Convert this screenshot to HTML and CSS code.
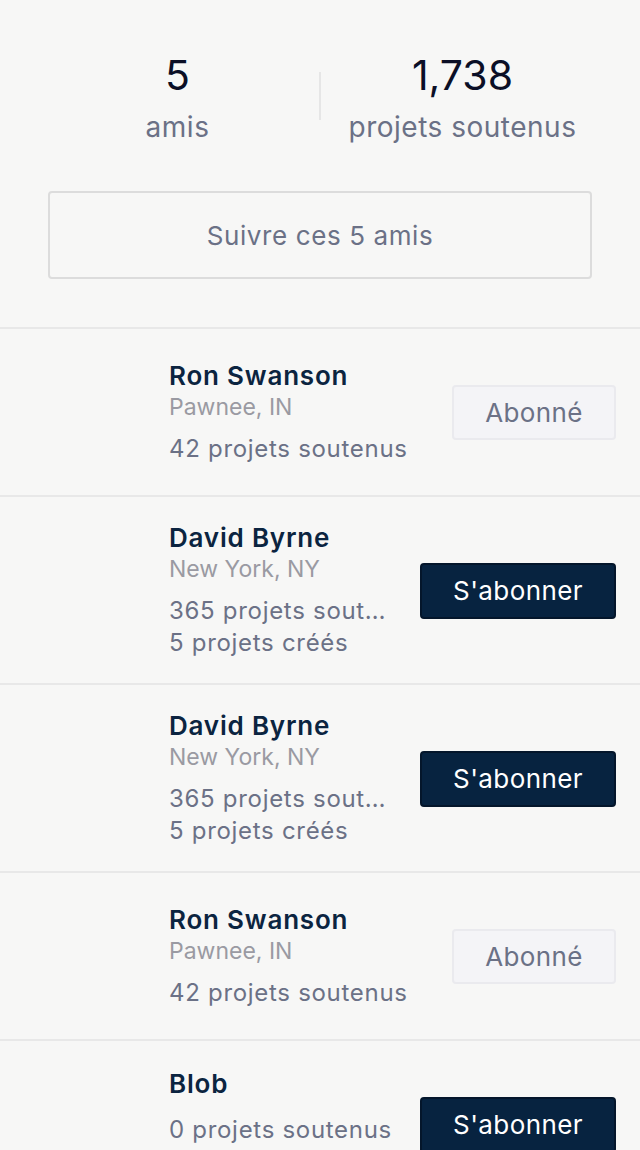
FILE: index.html
```html
<!DOCTYPE html>
<html lang="fr">
<head>
<meta charset="utf-8">
<link rel="stylesheet" href="styles.css">
</head>
<body>
<div class="page">
  <section class="summary">
    <div class="stats">
      <div class="stat">
        <div class="stat-num">5</div>
        <div class="stat-label">amis</div>
      </div>
      <div class="stat-divider"></div>
      <div class="stat">
        <div class="stat-num">1,738</div>
        <div class="stat-label">projets soutenus</div>
      </div>
    </div>
    <button class="follow-all">Suivre ces 5 amis</button>
  </section>

  <ul class="friends">
    <li class="friend">
      <span class="avatar"></span>
      <div class="info">
        <div class="name">Ron Swanson</div>
        <div class="loc">Pawnee, IN</div>
        <div class="counts">
          <div class="count">42 projets soutenus</div>
        </div>
      </div>
      <button class="btn btn-following">Abonné</button>
    </li>
    <li class="friend">
      <span class="avatar"></span>
      <div class="info">
        <div class="name">David Byrne</div>
        <div class="loc">New York, NY</div>
        <div class="counts">
          <div class="count">365 projets soutenus</div>
          <div class="count">5 projets créés</div>
        </div>
      </div>
      <button class="btn btn-follow">S'abonner</button>
    </li>
    <li class="friend">
      <span class="avatar"></span>
      <div class="info">
        <div class="name">David Byrne</div>
        <div class="loc">New York, NY</div>
        <div class="counts">
          <div class="count">365 projets soutenus</div>
          <div class="count">5 projets créés</div>
        </div>
      </div>
      <button class="btn btn-follow">S'abonner</button>
    </li>
    <li class="friend">
      <span class="avatar"></span>
      <div class="info">
        <div class="name">Ron Swanson</div>
        <div class="loc">Pawnee, IN</div>
        <div class="counts">
          <div class="count">42 projets soutenus</div>
        </div>
      </div>
      <button class="btn btn-following">Abonné</button>
    </li>
    <li class="friend friend-noloc">
      <span class="avatar"></span>
      <div class="info">
        <div class="name">Blob</div>
        <div class="counts">
          <div class="count">0 projets soutenus</div>
        </div>
      </div>
      <button class="btn btn-follow">S'abonner</button>
    </li>
  </ul>
</div>
</body>
</html>
```
FILE: styles.css
```css
html, body {
  margin: 0;
  padding: 0;
  background: #f7f7f6;
}
body {
  font-family: Inter, "Noto Sans", "Liberation Sans", sans-serif;
  -webkit-font-smoothing: antialiased;
}
.page {
  width: 640px;
  height: 1150px;
  overflow: hidden;
}
.summary {
  padding: 50px 48px 48px;
  border-bottom: 2px solid #e8e8e8;
}
.stats {
  display: flex;
  align-items: flex-start;
  margin: 0 -12px;
}
.stat {
  flex: 1;
  display: flex;
  flex-direction: column;
  align-items: center;
}
.stat-num {
  font-size: 41px;
  line-height: 50px;
  color: #0b0f26;
}
.stat-label {
  margin-top: 7px;
  font-size: 28px;
  line-height: 40px;
  letter-spacing: 0.5px;
  color: #6b7186;
}
.stat-divider {
  width: 2px;
  height: 48px;
  margin-top: 22px;
  background: #e6e6e6;
}
.follow-all {
  display: block;
  width: 100%;
  height: 88px;
  margin-top: 44px;
  background: transparent;
  border: 2px solid #dcdcdc;
  border-radius: 4px;
  font-family: inherit;
  font-size: 26px;
  letter-spacing: 0.6px;
  color: #6b7186;
}
.friends {
  list-style: none;
  margin: 0;
  padding: 0;
}
.friend {
  display: flex;
  align-items: center;
  gap: 24px;
  min-height: 168px;
  box-sizing: border-box;
  padding: 25px 24px 24px;
  border-bottom: 2px solid #e8e8e8;
}
.avatar {
  width: 121px;
  flex: none;
}
.info {
  flex: 1;
  min-width: 0;
}
.name {
  font-size: 26px;
  font-weight: 600;
  line-height: 32px;
  letter-spacing: 0.8px;
  color: #0b2440;
}
.loc {
  font-size: 23px;
  line-height: 30px;
  color: #9a9aa2;
}
.counts {
  margin-top: 11px;
}
.count {
  font-size: 24px;
  line-height: 32px;
  letter-spacing: 0.7px;
  color: #6b7186;
  white-space: nowrap;
  overflow: hidden;
  text-overflow: ellipsis;
}
.friend-noloc .info {
  align-self: flex-start;
  margin-top: 2px;
}
.friend-noloc .counts {
  margin-top: 14px;
}
.btn {
  flex: none;
  height: 56px;
  border-radius: 4px;
  font-family: inherit;
  font-size: 26px;
  letter-spacing: 0.4px;
  padding: 0;
}
.btn-following {
  width: 164px;
  height: 55px;
  background: #f4f4f7;
  border: 2px solid #eaeaee;
  color: #6b7186;
}
.btn-follow {
  width: 196px;
  background: #072340;
  border: 2px solid #04162b;
  color: #ffffff;
}
```
